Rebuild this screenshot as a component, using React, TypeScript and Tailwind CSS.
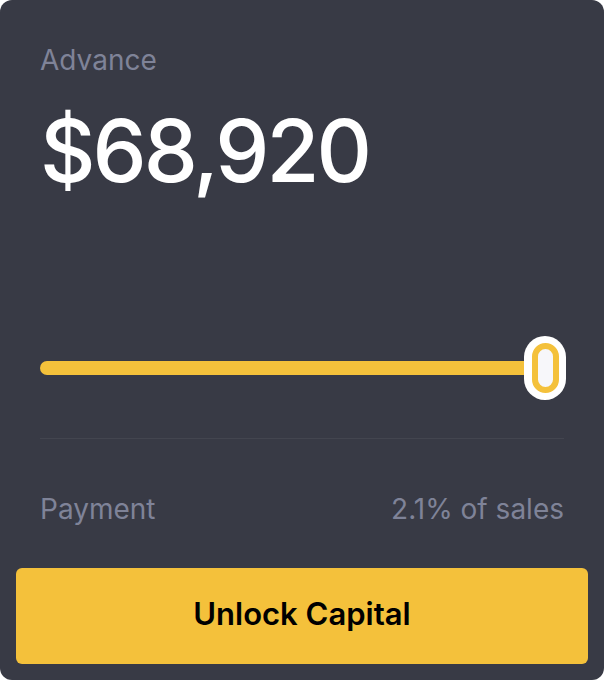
export default function App() {
  return (
    <div className="w-[604px] h-[680px] bg-white">
      <div
        className="w-full h-full rounded-xl bg-[#383a45] px-4 pb-4 flex flex-col"
        style={{ fontFamily: 'Inter, "Noto Sans", sans-serif' }}
      >
        <div className="px-6 pt-[42px]">
          <div className="text-[28px] leading-[36px] text-[#7f8398]">Advance</div>
          <div className="mt-[30px] text-[86px] leading-[86px] font-medium tracking-[-0.035em] text-white">$68,920</div>
        </div>

        <div className="px-6 mt-[142px]">
          <div className="relative h-16 flex items-center">
            <div className="h-[14px] flex-1 rounded-full bg-[#f4c13b]" />
            <div className="w-[42px] h-16 rounded-full bg-white flex items-center justify-center -ml-[8px] mr-[-2px]">
              <div className="w-[27px] h-[50px] rounded-full border-[6px] border-[#f4c13b] bg-[#f7f7fa]" />
            </div>
          </div>
          <div className="mt-[38px] h-px bg-[#43454f]" />
          <div className="mt-[52px] flex justify-between text-[28px] leading-[36px] text-[#7f8398]">
            <span>Payment</span>
            <span>2.1% of sales</span>
          </div>
        </div>

        <button className="mt-auto h-[96px] w-full rounded-md bg-[#f4c13b] pb-1 text-[31px] font-semibold text-black">
          Unlock Capital
        </button>
      </div>
    </div>
  );
}
